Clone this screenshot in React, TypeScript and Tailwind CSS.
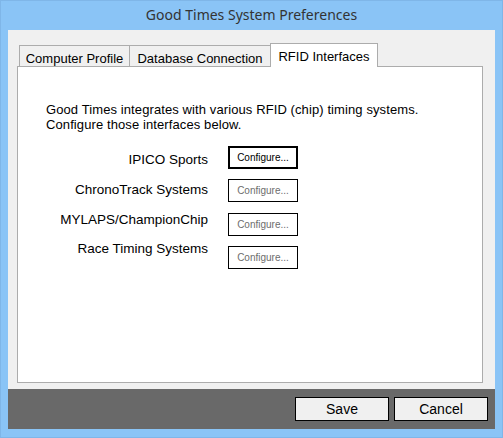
const rows = [
  { label: "IPICO Sports", active: true, labelMt: "mt-[6px]", mb: "mb-[10px]" },
  { label: "ChronoTrack Systems", active: false, labelMt: "mt-[3px]", mb: "mb-[11px]" },
  { label: "MYLAPS/ChampionChip", active: false, labelMt: "mt-[-1px]", mb: "mb-[10px]" },
  { label: "Race Timing Systems", active: false, labelMt: "mt-[-5px]", mb: "mb-0" },
]

function Tab({ label, width, selected }: { label: string; width: string; selected?: boolean }) {
  if (selected) {
    return (
      <div className={`relative z-10 -ml-px flex h-[24px] justify-center border border-b-0 border-[#acacac] bg-white pt-[3px] ${width}`}>
        {label}
      </div>
    )
  }
  return (
    <div className={`-ml-px flex h-[22px] justify-center border border-[#acacac] bg-[#f0f0f0] pt-[3px] first:ml-0 ${width}`}>
      {label}
    </div>
  )
}

export default function App() {
  return (
    <div
      className="flex h-[438px] w-[503px] flex-col border border-[#7fb6e8] bg-[#8ac4f6] text-[13px] text-black"
      style={{ fontFamily: '"Liberation Sans", Arial, sans-serif' }}
    >
      {/* title bar */}
      <div
        className="flex h-[29px] items-center justify-center pb-[2px] text-[14px] text-[#333]"
        style={{ fontFamily: '"Noto Sans", "Open Sans", sans-serif' }}
      >
        Good Times System Preferences
      </div>

      {/* client area */}
      <div className="mx-[7px] flex h-[399px] flex-col bg-[#f0f0f0]">
        <div className="flex flex-1 flex-col pl-[9px] pr-[12px] pt-[13px]">
          <div className="relative z-10 -mb-px ml-[2px] flex h-[24px] items-end">
            <Tab label="Computer Profile" width="w-[111px]" />
            <Tab label="Database Connection" width="w-[142px]" />
            <Tab label="RFID Interfaces" width="w-[108px]" selected />
          </div>
          <div className="flex h-[317px] flex-col border border-[#acacac] bg-white pt-[35px]">
            <p className="pl-[28px] leading-[15px] tracking-[0.1px]">
              Good Times integrates with various RFID (chip) timing systems.
              <br />
              Configure those interfaces below.
            </p>
            <div className="mt-[14px] flex flex-col">
              {rows.map((r) => (
                <div key={r.label} className={`flex items-start ${r.mb}`}>
                  <div className={`w-[190px] text-right text-[13.5px] leading-[15px] ${r.labelMt}`}>{r.label}</div>
                  <button
                    type="button"
                    className={`ml-[20px] flex h-[23px] w-[70px] items-center justify-center bg-white text-[10px] ${
                      r.active ? "border-2 border-black text-black" : "border border-black text-[#6d6d6d]"
                    }`}
                  >
                    Configure...
                  </button>
                </div>
              ))}
            </div>
          </div>
        </div>

        {/* button bar */}
        <div className="mt-[6px] flex h-[40px] items-center justify-end gap-[5px] bg-[#696969] pr-[7px]">
          <button type="button" className="h-[24px] w-[94px] border border-black bg-[#f0f0f0] text-[14px]">
            Save
          </button>
          <button type="button" className="h-[24px] w-[94px] border border-black bg-[#f0f0f0] text-[14px]">
            Cancel
          </button>
        </div>
      </div>
    </div>
  )
}
